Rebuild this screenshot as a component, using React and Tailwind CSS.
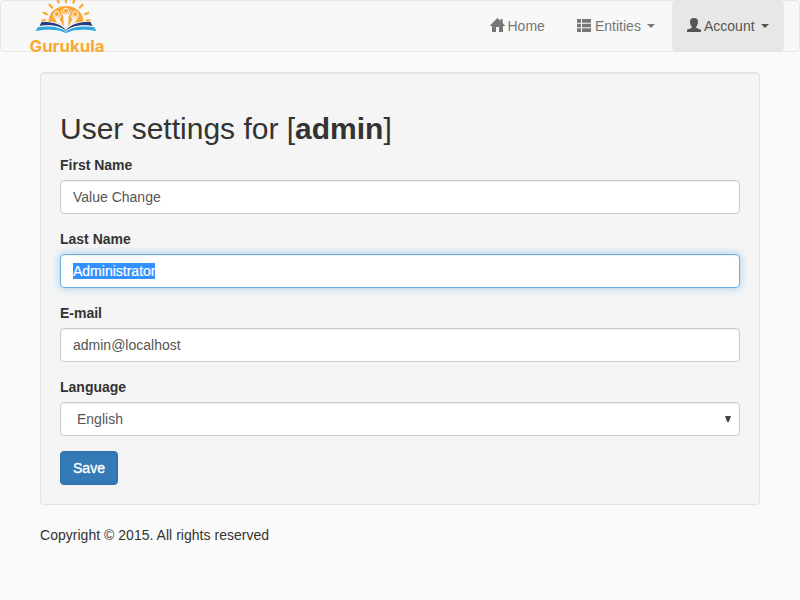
import React from "react";

function Logo() {
  return (
    <svg width="100" height="60" viewBox="0 0 100 60" className="ml-[19px] -mt-px shrink-0" role="img" aria-label="Gurukula">
      <g fill="none" stroke="#f9a936" strokeWidth="2.3" strokeLinecap="round">
        <path d="M22.6 20.4H25.2M23.8 12.8L26.8 14.2M29.5 4.8L32 7.6M37.6 0L38.5 2.4M46 -2V2.2M54.4 0L53.5 2.4M62.5 4.8L60 7.6M68.2 12.8L65.2 14.2M69.4 20.4H66.8" />
      </g>
      <path d="M28.5 21.8C28.5 12 36.5 6 46 6S63.5 12 63.5 21.8C57 21.5 50.5 23.5 46 28C41.5 23.5 35 21.5 28.5 21.8Z" fill="#f9a936" />
      <g fill="#f8f8f8">
        <path d="M40.8 9.3Q42 13.3 44 14.3H48Q50 13.3 51.2 9.3Q51.2 13.8 48.7 16.2L48.2 27H43.8L43.3 16.2Q40.8 13.8 40.8 9.3Z" />
        <path d="M33 12.2Q33.3 16.6 35.5 17.6H38Q40.5 16.8 41.4 13.8Q41.4 17.5 39.4 19L43 25.5L36.5 21.8L35.2 19Q32.6 17 33 12.2Z" />
        <path d="M59 12.2Q58.7 16.6 56.5 17.6H54Q51.5 16.8 50.6 13.8Q50.6 17.5 52.6 19L49 25.5L55.5 21.8L56.8 19Q59.4 17 59 12.2Z" />
      </g>
      <g fill="#f9a936" stroke="#f8f8f8" strokeWidth="1">
        <circle cx="46" cy="10.8" r="2.6" />
        <circle cx="36.8" cy="14" r="2.6" />
        <circle cx="55.2" cy="14" r="2.6" />
      </g>
      <path d="M21.5 22C32 21.5 41 24 46 30C51 24 60 21.5 70.5 22L72.5 26C61 24.2 51.5 26 46 31.3C40.5 26 31 24.2 19.5 26Z" fill="#263b86" />
      <path d="M18 27C30 25.2 39.5 27 46 31.2C52.5 27 62 25.2 74 27L76.5 31C64.5 29.2 54 29.5 48.5 32.2Q46 33.5 43.5 32.2C38 29.5 27.5 29.2 15.5 31Z" fill="#31a7dd" />
      <path d="M19 26.6C31 24.6 40 26.3 46 31.3C52 26.3 61 24.6 73 26.6" fill="none" stroke="#f8f8f8" strokeWidth=".8" />
      <text x="9.5" y="52.4" textLength="75" lengthAdjust="spacingAndGlyphs" fill="#f9a936" className="font-['Inter',sans-serif] text-[16px] font-bold">Gurukula</text>
    </svg>
  );
}

const Caret = () => (
  <svg width="8" height="4" viewBox="0 0 8 4" className="ml-1.5 shrink-0"><path d="M0 0H8L4 4Z" fill="currentColor" /></svg>
);

const HomeIcon = () => (
  <svg width="15" height="14" viewBox="0 0 15 14" className="mr-[2.5px] -mt-0.5 shrink-0" fill="currentColor">
    <path d="M7.5 0L10.5 3V1H12.6V5.1L15 7.6V8H13V14H9V9H6V14H2V8H0V7.6Z" />
  </svg>
);

const ListIcon = () => (
  <svg width="14" height="13" viewBox="0 0 14 13" className="mr-1 -mt-px shrink-0" fill="currentColor">
    <path d="M0 0H4V3.7H0ZM5 0H14V3.7H5ZM0 4.7H4V8.3H0ZM5 4.7H14V8.3H5ZM0 9.3H4V13H0ZM5 9.3H14V13H5Z" />
  </svg>
);

const UserIcon = () => (
  <svg width="14" height="14" viewBox="0 0 14 14" className="mr-[3px] -mt-0.5 shrink-0" fill="currentColor">
    <path d="M7 0C9.5 0 11 1.1 11 3.6C11 5.8 10.4 7.6 9.2 8.7V9.3C9.2 10 9.9 10.2 10.6 10.5L13 11.2C13.7 11.5 14 11.8 14 12.5V14H0V12.5C0 11.8 .3 11.5 1 11.2L3.4 10.5C4.1 10.2 4.8 10 4.8 9.3V8.7C3.6 7.6 3 5.8 3 3.6C3 1.1 4.5 0 7 0Z" />
  </svg>
);

const label = "mb-[5px] block h-5 font-bold leading-5 text-[#333]";
const field = "flex h-[34px] w-full items-center rounded border px-3 text-[14px] leading-5 outline-none";
const normal = "border-[#ccc] bg-white text-[#555] shadow-[inset_0_1px_1px_rgba(0,0,0,0.075)]";
const focused = "border-[#66afe9] bg-white text-[#555] shadow-[inset_0_1px_1px_rgba(0,0,0,0.075),0_0_8px_rgba(102,175,233,0.6)]";

export default function App() {
  return (
    <div className="min-h-screen overflow-hidden bg-[#fafafa] font-['Liberation_Sans',Arial,sans-serif] text-[14px] leading-5 text-[#333]">
      <nav className="mb-5 flex h-[52px] items-start justify-between rounded border border-[#e7e7e7] bg-[#f8f8f8] pr-[15px] text-[#777]">
        <Logo />
        <div className="flex">
          <a className="flex h-[50px] w-[86px] items-center pl-[15px]"><HomeIcon />Home</a>
          <a className="flex h-[50px] w-[111px] items-center pl-4"><ListIcon />Entities<Caret /></a>
          <a className="flex h-[50px] w-28 items-center rounded bg-[#e7e7e7] pl-[15px] text-[#555]"><UserIcon />Account<Caret /></a>
        </div>
      </nav>

      <main className="mx-10">
        <section className="h-[433px] rounded border border-[#e3e3e3] bg-[#f5f5f5] px-[19px] pt-[39px] shadow-[inset_0_1px_1px_rgba(0,0,0,0.05)]">
          <h2 className="mb-[10px] h-[33px] text-[30px] leading-[33px]">User settings for [<b>admin</b>]</h2>
          <div className="mb-[15px]">
            <span className={label}>First Name</span>
            <div className={`${field} ${normal}`}>Value Change</div>
          </div>
          <div className="mb-[15px]">
            <span className={label}>Last Name</span>
            <div className={`${field} ${focused}`}><span className="h-4 w-[82px] whitespace-nowrap bg-[#3390ff] leading-4 text-white [-webkit-text-stroke:0.2px_white]">Administrator</span></div>
          </div>
          <div className="mb-[15px]">
            <span className={label}>E-mail</span>
            <div className={`${field} ${normal}`}>admin@localhost</div>
          </div>
          <div className="mb-[15px]">
            <span className={label}>Language</span>
            <div className={`${field} ${normal} justify-between`}>
              <span className="ml-1">English</span>
              <svg width="6" height="6" viewBox="0 0 6 6" className="-mr-1"><path d="M0 0H6L3.8 6H2.2Z" fill="#444" /></svg>
            </div>
          </div>
          <button className="h-[34px] w-[58px] rounded border border-[#2e6da4] bg-[#337ab7] text-[14px] leading-5 text-white [-webkit-text-stroke:0.35px_white]">Save</button>
        </section>
        <footer className="mt-5 tracking-[0.025px]">Copyright © 2015. All rights reserved</footer>
      </main>
    </div>
  );
}
